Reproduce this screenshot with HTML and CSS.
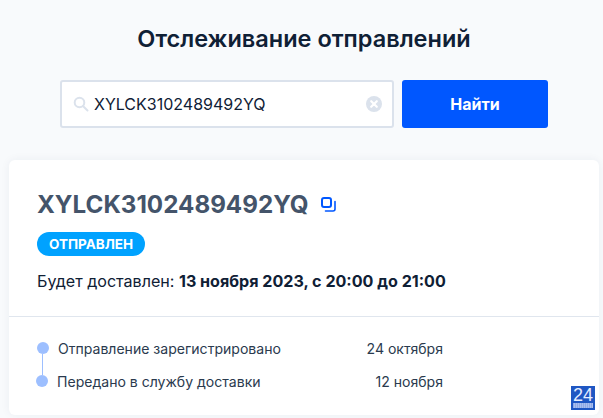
FILE: index.html
```html
<!DOCTYPE html>
<html lang="ru">
<head>
<meta charset="utf-8">
<title>Отслеживание отправлений</title>
<link rel="stylesheet" href="styles.css">
</head>
<body>
<main class="page">
  <h1 class="title">Отслеживание отправлений</h1>
  <form class="search">
    <div class="field">
      <svg class="search-icon" width="16" height="16" viewBox="0 0 16 16" fill="none"><circle cx="6.5" cy="6.5" r="4.8" stroke="#dbe2ec" stroke-width="2"/><path d="M10.2 10.2 14.5 14.5" stroke="#dbe2ec" stroke-width="2" stroke-linecap="round"/></svg>
      <span class="field-value">XYLCK3102489492YQ</span>
      <svg class="clear-icon" width="16" height="16" viewBox="0 0 16 16" fill="none"><circle cx="8" cy="8" r="8" fill="#dbe2ec"/><path d="M5.2 5.2 10.8 10.8M10.8 5.2 5.2 10.8" stroke="#fff" stroke-width="2.2" stroke-linecap="round"/></svg>
    </div>
    <button class="submit" type="button">Найти</button>
  </form>
  <section class="card">
    <div class="card-head">
      <div class="code-row">
        <h2 class="code">XYLCK3102489492YQ</h2>
        <svg class="copy-icon" width="15" height="15" viewBox="0 0 15 15" fill="none"><rect x="1" y="1" width="9" height="9" rx="2" stroke="#0057ff" stroke-width="2"/><path d="M14 4.5V12a2 2 0 0 1-2 2H4.5" stroke="#0057ff" stroke-width="1.6" stroke-linecap="round"/></svg>
      </div>
      <span class="status">ОТПРАВЛЕН</span>
      <p class="eta">Будет доставлен: <strong>13 ноября 2023, с 20:00 до 21:00</strong></p>
    </div>
    <ul class="events">
      <li class="event">
        <span class="dot"></span>
        <span class="event-name">Отправление зарегистрировано</span>
        <span class="event-date">24 октября</span>
      </li>
      <li class="event event-last">
        <span class="dot"></span>
        <span class="event-name">Передано в службу доставки</span>
        <span class="event-date">12 ноября</span>
      </li>
    </ul>
  </section>
  <div class="badge"><span class="badge-num">24</span><span class="badge-bar"></span></div>
</main>
</body>
</html>
```

FILE: styles.css
```css
* { box-sizing: border-box; }
html, body { margin: 0; height: 100%; }
body {
  background: #f8fafc;
  font-family: Inter, "Noto Sans", sans-serif;
  color: #0f2035;
  overflow: hidden;
}
.page {
  position: relative;
  height: 418px;
  padding: 0 4px 0 9px;
  display: flex;
  flex-direction: column;
}
.title {
  margin: 25px 0 0;
  height: 28px;
  font-size: 23.5px;
  line-height: 28px;
  font-weight: 600;
  text-align: center;
  color: #0f2035;
}
.search {
  margin: 27px 0 0 51px;
  display: flex;
  gap: 8px;
  height: 48px;
}
.field {
  width: 334px;
  display: flex;
  align-items: center;
  background: #fff;
  border: 2px solid #dbe2ec;
  border-radius: 3px;
  padding: 0 10px 0 11px;
}
.search-icon { flex: none; }
.field-value {
  flex: 1;
  margin-left: 5px;
  font-size: 16px;
  color: #0f2035;
}
.clear-icon { flex: none; }
.submit {
  width: 146px;
  border: 0;
  border-radius: 3px;
  background: #0057ff;
  color: #fff;
  font: 700 16px Inter, sans-serif;
}
.card {
  margin-top: 32px;
  height: 255px;
  background: #fff;
  border-radius: 6px;
  box-shadow: 0 0 10px rgba(30, 50, 80, .06);
}
.card-head {
  height: 157px;
  padding: 30px 28px 0;
  border-bottom: 1px solid #e0e6ee;
}
.code-row {
  display: flex;
  align-items: center;
  gap: 12px;
  height: 30px;
}
.code {
  margin: 0;
  font-size: 24.2px;
  line-height: 30px;
  font-weight: 700;
  color: #44546a;
}
.copy-icon { flex: none; margin-top: -1px; }
.status {
  display: inline-block;
  margin-top: 12px;
  height: 24px;
  padding: 0 12px;
  border-radius: 12px;
  background: #00a2ff;
  color: #fff;
  font-size: 13.5px;
  line-height: 24px;
  font-weight: 700;
  vertical-align: top;
}
.eta {
  margin: 13px 0 0;
  font-size: 16.08px;
  line-height: 24px;
  color: #0f2035;
}
.eta strong { font-weight: 700; }
.events {
  list-style: none;
  margin: 0;
  padding: 19px 0 0 28px;
  width: 434px;
}
.event {
  position: relative;
  display: flex;
  align-items: center;
  height: 24px;
  margin-bottom: 9px;
  font-size: 14.05px;
  color: #2a3a4e;
}
.event-last { margin-left: -1px; margin-bottom: 0; }
.dot {
  flex: none;
  width: 12px;
  height: 12px;
  border-radius: 50%;
  background: #9dbfff;
  margin-right: 9px;
}
.event:first-child::after {
  content: "";
  position: absolute;
  left: 5px;
  top: 18px;
  width: 1px;
  height: 21px;
  background: #9dbfff;
}
.event-name { flex: 1; }
.event-date { white-space: nowrap; }
.badge {
  position: absolute;
  left: 571px;
  top: 386px;
  width: 24px;
  height: 24px;
  background: #1f57c3;
  display: flex;
  flex-direction: column;
  align-items: center;
  color: #e6eeff;
}
.badge-num {
  font: 400 18px/16px "Liberation Sans", sans-serif;
  margin-top: 1px;
}
.badge-bar {
  width: 20px;
  height: 5px;
  background: repeating-linear-gradient(90deg, #8fa9e6 0 1px, #a9bfee 1px 2px);
}
```
